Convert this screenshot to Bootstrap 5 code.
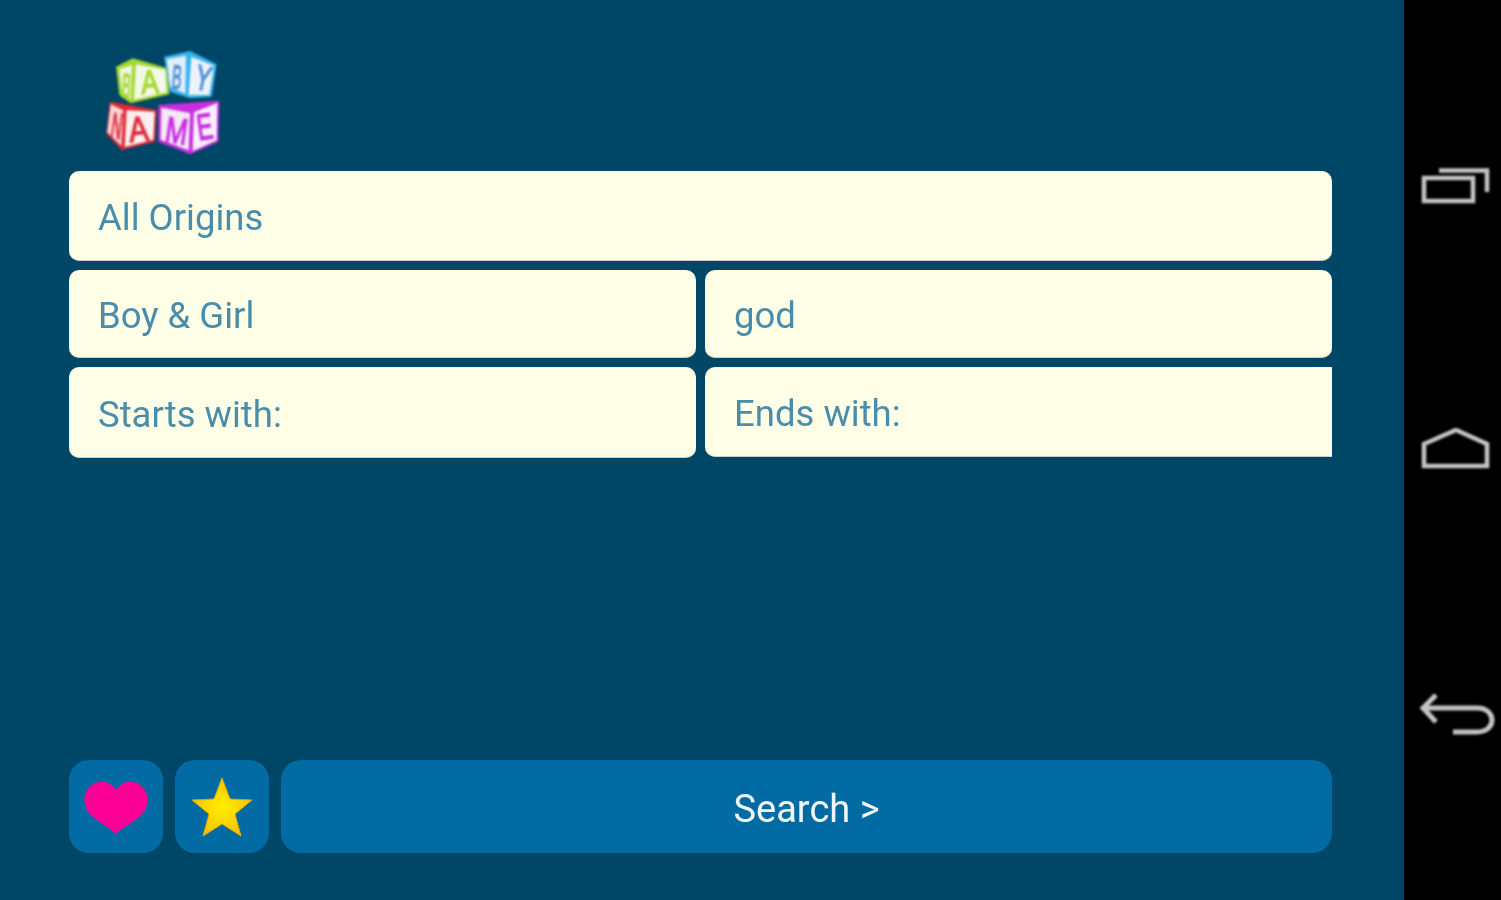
<!DOCTYPE html>
<html lang="en">
<head>
    <meta charset="UTF-8">
    <title>Baby Name</title>
    <link rel="stylesheet" href="https://cdn.jsdelivr.net/npm/bootstrap@5.3.2/dist/css/bootstrap.min.css">
    <style>
        html, body { height: 900px; overflow: hidden; background: #000; }
        .screen { height: 900px; }
        .app-area { width: 1404px; background: #004666; padding: 35px 69px 47px 69px; }
        .nav-strip { width: 97px; background: #000; padding-top: 168px; padding-left: 7px; gap: 222px; }
        .logo-box { width: 150px; height: 130px; margin-left: 21px; margin-bottom: 6px; filter: blur(1px); }
        .logo-box text { font-family: "Liberation Sans", sans-serif; font-size: 88px; stroke-width: 3; }
        .field-stack { width: 1263px; gap: 9px; }
        .pick-field.form-control {
            font-family: Roboto, sans-serif;
            font-size: 36.5px;
            height: 90px;
            padding: 4px 29px 0 29px;
            color: #4a8dab;
            background: #ffffe8;
            border: 0;
            border-bottom: 1px solid #c9d0c4;
            border-radius: 10px;
            box-shadow: none;
            filter: blur(.7px);
        }
        .pick-field::placeholder { color: #4a8dab; opacity: 1; }
        .pick-field.short-one { height: 88px; }
        .pick-field.tall-one { height: 91px; }
        .pick-field.cut-right { border-radius: 10px 0 0 10px; height: 90px; }
        .half-field { flex: 1 1 0; min-width: 0; }
        .row-gap { gap: 9px; }
        .bottom-bar { width: 1263px; gap: 12px; }
        .square-btn.btn, .search-btn.btn {
            height: 93px;
            background: #026ba4;
            border: 0;
            border-radius: 20px;
            padding: 0;
            filter: blur(.7px);
        }
        .square-btn.btn { width: 94px; }
        .search-btn.btn {
            color: #f2f6f8;
            font-family: Roboto, sans-serif;
            font-size: 38px;
            padding-top: 5px;
        }
        .nav-icon { display: block; filter: blur(.8px); }
    </style>
</head>
<body>

<div class="screen d-flex">
    <div class="app-area d-flex flex-column">
        <div class="logo-box">
            <svg width="150" height="130" viewBox="0 0 450 390">
                <defs>
                    <radialGradient id="starFill" cx="50%" cy="50%" r="50%">
                        <stop offset="0" stop-color="#ffee00"/>
                        <stop offset="1" stop-color="#f8c400"/>
                    </radialGradient>
                </defs>
                <!-- green cube -->
                <polygon points="78,95 128,70 232,100 238,178 122,205 88,180" fill="#a4d92f"/>
                <polygon points="88,102 126,90 122,192 96,172" fill="#eef5e0"/>
                <polygon points="138,88 226,104 230,172 132,194" fill="#f4f8e8"/>
                <text transform="translate(94,186) rotate(4) scale(.45,1.15)" fill="#a4d92f" stroke="#a4d92f">B</text>
                <text transform="translate(155,178) rotate(-4) scale(.9,1.15)" fill="#a4d92f" stroke="#a4d92f">A</text>
                <!-- blue cube -->
                <polygon points="222,65 300,48 380,88 365,185 300,190 240,170" fill="#37b4ee"/>
                <polygon points="230,72 288,62 286,176 240,156" fill="#e4eef8"/>
                <polygon points="304,66 372,92 358,180 296,180" fill="#eef3fb"/>
                <text transform="translate(243,160) rotate(5) scale(.5,1.15)" fill="#4d8fd8" stroke="#4d8fd8">B</text>
                <text transform="translate(310,160) rotate(12) scale(.8,1.2)" fill="#4d8fd8" stroke="#4d8fd8">Y</text>
                <!-- red cube -->
                <polygon points="60,200 200,225 195,320 95,345 48,295" fill="#e02a36"/>
                <polygon points="62,208 100,226 94,332 52,292" fill="#f6d6d6"/>
                <polygon points="110,226 194,230 190,314 104,336" fill="#faeef0"/>
                <text transform="translate(59,308) rotate(8) scale(.5,1.25)" fill="#df2b3a" stroke="#df2b3a">N</text>
                <text transform="translate(120,322) rotate(-6) scale(1,1.2)" fill="#df2b3a" stroke="#df2b3a">A</text>
                <!-- magenta cube -->
                <polygon points="205,210 388,197 385,320 300,358 205,320" fill="#c92fe0"/>
                <polygon points="214,218 300,234 296,346 212,314" fill="#f4e8fa"/>
                <polygon points="312,232 382,204 380,316 308,348" fill="#f8effc"/>
                <text transform="translate(222,320) rotate(8) scale(.9,1.25)" fill="#c92fe0" stroke="#c92fe0">M</text>
                <text transform="translate(326,316) rotate(-8) scale(.8,1.25)" fill="#c92fe0" stroke="#c92fe0">E</text>
            </svg>
        </div>

        <div class="field-stack d-flex flex-column">
            <input class="pick-field form-control" type="text" value="All Origins">
            <div class="d-flex row-gap">
                <div class="half-field"><input class="pick-field short-one form-control" type="text" value="Boy &amp; Girl"></div>
                <div class="half-field"><input class="pick-field short-one form-control" type="text" value="god"></div>
            </div>
            <div class="d-flex row-gap">
                <div class="half-field"><input class="pick-field tall-one form-control" type="text" placeholder="Starts with:"></div>
                <div class="half-field"><input class="pick-field cut-right form-control" type="text" placeholder="Ends with:"></div>
            </div>
        </div>

        <div class="bottom-bar d-flex mt-auto">
            <button class="square-btn btn d-flex align-items-center justify-content-center" type="button" aria-label="Favourites">
                <svg width="66" height="56" viewBox="0 0 66 56">
                    <path d="M33 55 C25 47 14 43 6 34 C-1 26 0 12 9 6 C18 0 28 3 33 11 C38 3 48 0 57 6 C66 12 67 26 60 34 C52 43 41 47 33 55 Z" fill="#ff0096"/>
                </svg>
            </button>
            <button class="square-btn btn d-flex align-items-center justify-content-center" type="button" aria-label="Starred">
                <svg width="62" height="60" viewBox="0 0 62 60">
                    <polygon points="31,1 39,22 61,23 44,37 50,59 31,47 12,59 18,37 1,23 23,22" fill="url(#starFill)" stroke="#d9a800" stroke-width="1"/>
                </svg>
            </button>
            <button class="search-btn btn flex-grow-1" type="button">Search &gt;</button>
        </div>
    </div>

    <div class="nav-strip d-flex flex-column align-items-center">
        <svg class="nav-icon" width="70" height="38" viewBox="0 0 70 38" fill="none" stroke="#c4c4c4" stroke-width="4.5">
            <rect x="3" y="10" width="49" height="23"/>
            <path d="M18 2.5 H66 V24"/>
        </svg>
        <svg class="nav-icon" width="70" height="42" viewBox="0 0 70 42" fill="none" stroke="#c4c4c4" stroke-width="4.5">
            <path d="M3 16 L35 2 L66 16 V38 H3 Z"/>
        </svg>
        <svg class="nav-icon" width="78" height="44" viewBox="0 0 78 44" fill="none" stroke="#c4c4c4" stroke-width="5">
            <path d="M19 3 L6 16 L19 30"/>
            <path d="M6 16 H60 C80 16 80 40 60 40 H36"/>
        </svg>
    </div>
</div>

<script src="https://cdn.jsdelivr.net/npm/bootstrap@5.3.2/dist/js/bootstrap.bundle.min.js"></script>
</body>
</html>
